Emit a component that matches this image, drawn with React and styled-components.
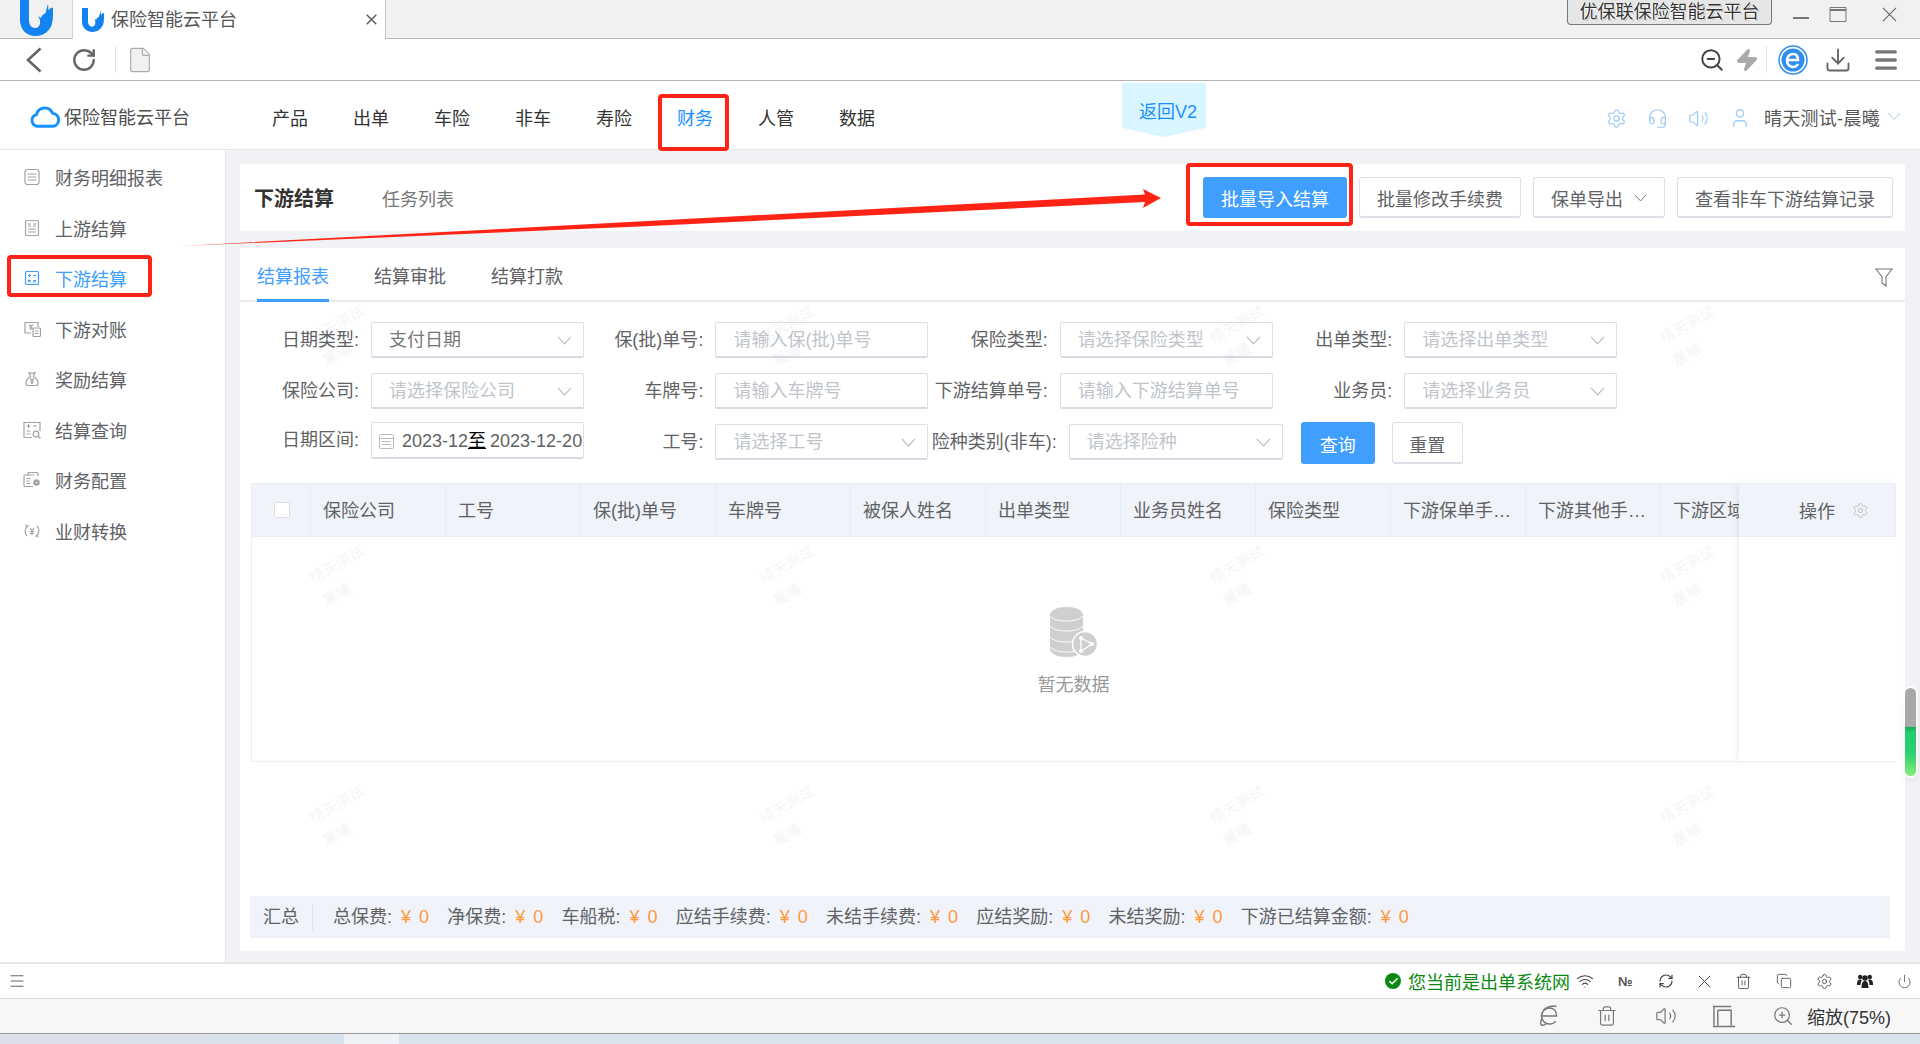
import React from 'react'
import styled, { createGlobalStyle } from 'styled-components'
import {
  Settings, Headset, Volume2, User, ZoomOut, ZoomIn, Zap, Download, Menu,
  RefreshCw, Trash2, Copy, Wifi, Power, Check, RotateCw, File,
} from 'lucide-react'

const Global = createGlobalStyle`
  html, body { margin: 0; padding: 0; background: #fff; }
  * { box-sizing: border-box; }
  body { font-family: "Liberation Sans", "Noto Sans CJK SC", sans-serif; font-size: 18px; color: #606266; }
`

const Page = styled.div`
  position: relative;
  width: 1920px;
  height: 1044px;
  overflow: hidden;
  display: flex;
  flex-direction: column;
`

/* browser chrome */
const TitleBar = styled.div`
  height: 39px;
  flex: none;
  display: flex;
  background: #f1f1f1;
  border-bottom: 1px solid #b4b4b4;
`
const BigLogo = styled.div`
  width: 72px;
  padding-left: 20px;
  display: flex;
`
const BrowserTab = styled.div`
  width: 314px;
  height: 39px;
  background: #fff;
  border-left: 1px solid #d4d4d4;
  border-right: 1px solid #c4c4c4;
  display: flex;
  align-items: center;
  padding: 0 8px 0 9px;
  color: #555;
  line-height: 38px;
  span { margin-left: 7px; flex: 1; }
`
const BrandBox = styled.div`
  margin-left: auto;
  width: 205px;
  height: 25px;
  border: 1px solid #777;
  border-top: none;
  border-radius: 0 0 4px 4px;
  background: #e6e6e6;
  text-align: center;
  line-height: 25px;
  color: #333;
  text-shadow: 1px 0 0 #fff, -1px 0 0 #fff, 0 1px 0 #fff, 1px 1px 0 #888;
`
const WinControls = styled.div`
  display: flex;
  width: 148px;
  padding: 7px 0 0 21px;
  color: #666;
`
const MinLine = styled.i`
  width: 16px;
  height: 2px;
  background: #777;
  margin: 10px 20px 0 0;
`
const MaxSvg = styled.svg`
  margin-right: 35px;
`
const Toolbar = styled.div`
  height: 42px;
  flex: none;
  display: flex;
  align-items: center;
  padding-left: 26px;
  border-bottom: 1px solid #b4b4b4;
  color: #666;
  background: #fff;
`
const ToolSlot = styled.div`
  display: flex;
  flex: none;
  margin-left: ${p => p.$ml || 0}px;
`
const ToolDivider = styled.i`
  width: 1px;
  height: 27px;
  flex: none;
  background: #e2e2e2;
  margin-left: ${p => p.$ml || 0}px;
`

/* app nav */
const AppNav = styled.div`
  height: 69px;
  flex: none;
  display: flex;
  align-items: center;
  border-bottom: 1px solid #e5e5e5;
  padding-left: 30px;
  background: #fff;
`
const AppLogo = styled.div`
  width: 242px;
  display: flex;
  align-items: center;
  gap: 4px;
  margin-top: 2px;
  color: #4d4d4d;
`
const NavList = styled.div`
  display: flex;
  gap: 45px;
  margin-top: 7px;
`
const NavItem = styled.div`
  position: relative;
  color: ${p => (p.$active ? '#1890ff' : '#333')};
  line-height: 26px;
`
const RedBox = styled.div`
  position: absolute;
  border: 4px solid #ff2416;
  border-radius: 4px;
  z-index: 5;
  pointer-events: none;
  top: ${p => p.$t}px;
  left: ${p => p.$l}px;
  right: ${p => p.$r}px;
  bottom: ${p => p.$b}px;
`
const BackBadge = styled.div`
  position: absolute;
  left: 1122px;
  top: 83px;
  width: 84px;
  height: 54px;
  padding: 15px 0 0 17px;
  background: #d9f5ff;
  color: #1890ff;
  line-height: 28px;
  clip-path: polygon(0 0, 100% 0, 100% 83%, 50% 100%, 0 83%);
`
const NavRight = styled.div`
  margin-left: auto;
  display: flex;
  align-items: center;
  padding: 3px 19px 0 0;
  color: #555;
  svg.tool { color: #9ccbf5; margin: 3px 20px 0 0; }
`
const UserName = styled.span`
  margin: 0 7px 0 -7px;
  letter-spacing: 0.3px;
`

/* body */
const Body = styled.div`
  flex: 1;
  min-height: 0;
  display: flex;
`
const Sidebar = styled.aside`
  width: 226px;
  flex: none;
  background: #fff;
  border-right: 1px solid #e6e6e6;
  padding-top: 2px;
`
const SideItem = styled.div`
  position: relative;
  height: 50.5px;
  display: flex;
  align-items: center;
  padding-left: 22px;
  color: ${p => (p.$active ? '#409eff' : '#606266')};
`
const SideIcon = styled.svg`
  width: 20px;
  height: 20px;
  margin-right: 13px;
  fill: none;
  stroke: ${p => (p.$active ? '#409eff' : '#a2a2a2')};
  stroke-width: 1.2;
`
const Main = styled.main`
  flex: 1;
  min-width: 0;
  background: #f0f2f5;
  padding: 14px 15px 11px 14px;
  display: flex;
  flex-direction: column;
  gap: 17px;
`
const HeaderCard = styled.div`
  height: 67px;
  flex: none;
  background: #fff;
  display: flex;
  align-items: center;
  padding: 0 12px 0 14px;
`
const PageTitle = styled.h2`
  margin: 0;
  font-size: 20px;
  font-weight: 700;
  color: #333;
`
const TaskLink = styled.span`
  margin-left: 48px;
  color: #777;
`
const Actions = styled.div`
  margin-left: auto;
  display: flex;
  gap: 12px;
`
const Button = styled.button`
  position: relative;
  font: inherit;
  height: ${p => p.$h || 41}px;
  width: ${p => (p.$w ? p.$w + 'px' : 'auto')};
  padding: 2px ${p => (p.$w ? 0 : 17)}px 0;
  border-radius: 3px;
  border: 1px solid ${p => (p.$primary ? '#409eff' : '#dcdfe6')};
  border-bottom-width: 2px;
  background: ${p => (p.$primary ? '#409eff' : '#fff')};
  color: ${p => (p.$primary ? '#fff' : '#606266')};
  display: flex;
  align-items: center;
  justify-content: center;
  gap: 11px;
  white-space: nowrap;
  svg { margin-left: 0; }
`
const TabCard = styled.section`
  flex: 1;
  min-height: 0;
  background: #fff;
  display: flex;
  flex-direction: column;
`
const TabRow = styled.div`
  height: 54px;
  flex: none;
  display: flex;
  gap: 45px;
  padding: 0 12px 0 17px;
  border-bottom: 2px solid #e8eaf0;
`
const Tab = styled.div`
  height: 54px;
  line-height: 58px;
  color: ${p => (p.$active ? '#409eff' : '#606266')};
  border-bottom: ${p => (p.$active ? '3px solid #409eff' : 'none')};
`
const FilterSlot = styled.div`
  margin-left: auto;
  padding-top: 20px;
  color: #777;
`
const Form = styled.div`
  padding: 20px 0 0 4px;
  flex: none;
`
const FormRow = styled.div`
  display: flex;
  height: ${p => p.$h}px;
  margin-bottom: ${p => p.$mb}px;
`
const Field = styled.label`
  display: flex;
  width: ${p => (p.$wide ? 349 : 344.4)}px;
  flex: none;
  margin-left: ${p => (p.$wide ? -2 : 0)}px;
  padding-top: ${p => p.$pt || 0}px;
`
const FieldLabel = styled.span`
  width: ${p => (p.$wide ? 126 : 115)}px;
  flex: none;
  height: 36px;
  line-height: 37px;
  margin-right: 12px;
  text-align: right;
  white-space: nowrap;
`
const Control = styled.div`
  width: ${p => (p.$wide ? 214 : 213)}px;
  flex: none;
  height: ${p => p.$h || 36}px;
  border: 1px solid #dcdfe6;
  border-bottom: 2px solid #d8dbe3;
  border-radius: 2px;
  display: flex;
  align-items: center;
  padding: 1px 11px 0 17px;
  overflow: hidden;
  white-space: nowrap;
  line-height: 32px;
  color: ${p => (p.$filled ? '#777' : '#c0c4cc')};
`
const DateControl = styled(Control)`
  padding: 1px 0 0 6px;
  color: #606266;
  svg { flex: none; margin-right: 7px; }
  b { font-weight: 400; color: #000; text-decoration: underline; margin: 0 4px 0 0; }
`
const ChevronSvg = styled.svg`
  margin-left: auto;
  flex: none;
  fill: none;
  stroke: ${p => p.$color || '#b4b8c0'};
  stroke-width: 1.1;
`
const FormButtons = styled.div`
  display: flex;
  gap: 17px;
  margin-left: 21px;
`
const TableWrap = styled.div`
  position: relative;
  margin: 19px 9px 0 11px;
  flex: none;
`
const THead = styled.div`
  height: 54px;
  display: flex;
  background: #f0f3f9;
  border: 1px solid #ebeef5;
  overflow: hidden;
`
const CheckCell = styled.div`
  width: 59px;
  flex: none;
  display: flex;
  align-items: center;
  padding-left: 22px;
  border-right: 1px solid #e8ebf2;
`
const Checkbox = styled.i`
  width: 16px;
  height: 16px;
  background: #fff;
  border: 1px solid #dcdfe6;
  border-radius: 2px;
`
const TH = styled.div`
  width: 135px;
  flex: none;
  padding: 0 12px;
  line-height: 54px;
  border-right: 1px solid #e8ebf2;
  white-space: nowrap;
  overflow: hidden;
  text-overflow: ellipsis;
`
const TBody = styled.div`
  height: 225px;
  border: 1px solid #ebeef5;
  border-top: none;
  display: flex;
  flex-direction: column;
  align-items: center;
  justify-content: center;
  padding-top: 5px;
  gap: 16px;
  color: #999;
  line-height: 24px;
`
const FixedCol = styled.div`
  position: absolute;
  top: 0;
  right: 0;
  bottom: 0;
  width: 157px;
  background: #fff;
  box-shadow: -3px 0 6px rgba(60, 70, 100, 0.07);
  border-bottom: 1px solid #ebeef5;
  z-index: 2;
`
const FixedHead = styled.div`
  height: 54px;
  background: #f0f3f9;
  border: 1px solid #ebeef5;
  border-left: none;
  display: flex;
  align-items: center;
  padding-left: 60px;
  gap: 17px;
  svg { color: #aaa; }
`
const Summary = styled.div`
  margin: auto 15px 13px 10px;
  height: 42px;
  flex: none;
  background: #f0f3f9;
  display: flex;
  align-items: center;
  padding-left: 13px;
`
const SumTitle = styled.span`
  padding-right: 13px;
  margin-right: 20px;
  line-height: 25px;
  border-right: 1px solid #dde0e8;
`
const SumItem = styled.span`
  margin-right: 16.7px;
  line-height: 25px;
  white-space: nowrap;
  em { font-style: normal; color: #ff9a3c; margin-left: 9px; letter-spacing: 1.5px; }
`

/* bottom bars */
const StatusBar = styled.div`
  height: 37px;
  flex: none;
  background: #fff;
  border-top: 2px solid #e6e6e6;
  border-bottom: 1px solid #d8d8d8;
  display: flex;
  align-items: center;
  padding: 0 8px;
  color: #555;
`
const NetText = styled.div`
  margin-left: auto;
  display: flex;
  align-items: center;
  color: #0a8a12;
  gap: 7px;
`
const NetDot = styled.i`
  width: 16px;
  height: 16px;
  border-radius: 50%;
  background: #0a8a12;
  display: flex;
  align-items: center;
  justify-content: center;
  color: #fff;
`
const StatusIcons = styled.div`
  display: flex;
  align-items: center;
  gap: 24px;
  margin-left: 6px;
  color: #444;
`
const NumSign = styled.span`
  width: 16px;
  font-size: 13px;
  font-weight: 700;
  white-space: nowrap;
  color: #555;
`
const FooterBar = styled.div`
  height: 35px;
  flex: none;
  background: #f7f7f7;
  border-bottom: 1px solid #999;
  display: flex;
  align-items: center;
  justify-content: flex-end;
  padding-right: 29px;
  color: #333;
`
const FooterIcons = styled.div`
  display: flex;
  align-items: center;
  gap: 36.6px;
  margin-right: 13px;
  color: #777;
  svg { flex: none; }
`
const DesktopStrip = styled.div`
  height: 10px;
  flex: none;
  background: linear-gradient(90deg, #dde0ea 0, #d8e3ed 400px, #d8e3ed 100%);
  padding-left: 344px;
  i { display: block; width: 55px; height: 10px; background: #eef1f6; }
`

/* overlays */
const Watermarks = styled.div`
  position: absolute;
  left: 112px;
  top: 220px;
  width: 1800px;
  display: flex;
  flex-wrap: wrap;
  pointer-events: none;
  z-index: 3;
`
const Watermark = styled.div`
  width: 450px;
  height: 240px;
  display: flex;
  flex-direction: column;
  align-items: center;
  justify-content: center;
  gap: 10px;
  font-size: 15px;
  font-weight: 700;
  line-height: 20px;
  color: rgba(0, 0, 0, 0.055);
  span { display: block; transform: rotate(-30deg); }
`
const ArrowSvg = styled.svg`
  position: absolute;
  left: 0;
  top: 0;
  z-index: 6;
  pointer-events: none;
`
const ScrollThumb = styled.div`
  position: absolute;
  left: 1905px;
  top: 688px;
  width: 11px;
  height: 88px;
  border-radius: 6px;
  background: linear-gradient(180deg, #a8a8a8 0, #a8a8a8 44%, #18a858 44%, #22cc6e 50%, #2fd070 75%, #85ee7a 100%);
  box-shadow: 0 0 0 2px rgba(255, 255, 255, 0.8), 0 4px 8px rgba(0, 0, 0, 0.08);
  z-index: 6;
`

const Chevron = ({ w = 15, color }) => (
  <ChevronSvg width={w} height={w * 0.6} viewBox="0 0 16 9.6" $color={color}>
    <path d="M1 1l7 7.5L15 1" />
  </ChevronSvg>
)

const Cross = ({ s, color = 'currentColor', sw = 1.2 }) => (
  <svg width={s} height={s} viewBox="0 0 16 16" fill="none" stroke={color} strokeWidth={sw} style={{ flex: 'none' }}>
    <path d="M1 1l14 14M15 1L1 15" />
  </svg>
)

const ULogo = ({ w, h }) => (
  <svg width={w} height={h} viewBox="0 0 33 36">
    <path
      fill="#1283f0"
      d="M0 0h8.500c.3 0 .5.2.5.5V20c0 5 2.500 8 6 8 3.500 0 5.500-3 5-7-.3-2-1-3.500-2-5l3 2 1.500-3 3-2 2.500-9 .5 6 3-2.500 2 .5c-.5 5-.5 9-1 13C31.500 30 24 36 15.500 36 6 36 0 29 0 20V0z"
    />
  </svg>
)

const Cloud = () => (
  <svg width="30" height="24" viewBox="0 0 30 24" fill="none" stroke="#1890ff" strokeWidth="3">
    <path d="M8 22.300a6 6 0 0 1-1.500-11.800A8.500 8.500 0 0 1 22.600 9.200 6.600 6.600 0 0 1 23 22.300z" />
  </svg>
)

const sideIcons = [
  <><rect x="3" y="2.500" width="14" height="15" rx="2.500" /><path d="M5.500 7h9M5.500 10h9M5.500 13h9" /></>,
  <><rect x="3.500" y="2.500" width="13" height="15" rx="1" /><path d="M6 6h3M6 8h3M11 6h3M11 8h3M6 11h8M6 14h8" /></>,
  <><rect x="3.500" y="3.500" width="13" height="13" rx="1" /><path d="M6 7.500h3M7.500 6v3M11 7.500h3M6 12l2.500 2M8.500 12L6 14M11 12.500h3M11 14h3" /></>,
  <><path d="M16 8V3.500H3V14h6" /><path d="M7 5.500l2 2 2-2M9 7.500V11M7 9h4" /><rect x="11" y="9" width="7.500" height="8.500" rx="1" /><path d="M13 12h3.500M13 14.500h3.500" /></>,
  <><path d="M7 3.500l3 1 3-1-1.500 4c3 1.500 4.500 4.500 4.500 7 0 1.500-1 2-2 2H6c-1 0-2-.5-2-2 0-2.500 1.500-5.500 4.500-7z" /><path d="M8 9.500l2 2 2-2M10 11.500V15M8 13h4" /></>,
  <><path d="M18 11V2.500H2v15h8" /><path d="M4.500 6h4M6.500 4v4M11 6h4M4.500 11h4M4.500 14h4" /><circle cx="14" cy="14" r="2.800" /><path d="M16 16l2.500 2.500" /></>,
  <><path d="M11 16.500H3a1 1 0 0 1-1-1V6a1 1 0 0 1 1-1h9" /><path d="M6 5V3.500a1 1 0 0 1 1-1h8a1 1 0 0 1 1 1V6M4.500 8.500h4M4.500 11h3M4.500 13.500h4" /><circle cx="14.500" cy="12.500" r="2" strokeWidth="2.500" /></>,
  <><path d="M5 5.500a7 7 0 0 0 0 9.500M15 14.500a7 7 0 0 0 0-9.500" /><path d="M3.500 3.500l1.500 2 2-1M16.500 16.500l-1.500-2-2 1" /><path d="M8 7l2 2.500L12 7M10 9.500V14M8 10.500h4M8 12.500h4" /></>,
]
const sideItems = ['财务明细报表', '上游结算', '下游结算', '下游对账', '奖励结算', '结算查询', '财务配置', '业财转换']
const navItems = ['产品', '出单', '车险', '非车', '寿险', '财务', '人管', '数据']
const columns = ['保险公司', '工号', '保(批)单号', '车牌号', '被保人姓名', '出单类型', '业务员姓名', '保险类型', '下游保单手续费', '下游其他手续费', '下游区域']
const summary = [
  ['总保费', 0], ['净保费', 0], ['车船税', 0], ['应结手续费', 0], ['未结手续费', 0],
  ['应结奖励', 0], ['未结奖励', 0], ['下游已结算金额', 0],
]

const Select = ({ label, text, filled, pt, wide }) => (
  <Field $pt={pt} $wide={wide}>
    <FieldLabel $wide={wide}>{label}:</FieldLabel>
    <Control $filled={filled} $wide={wide}>
      {text}
      <Chevron />
    </Control>
  </Field>
)
const Input = ({ label, text }) => (
  <Field>
    <FieldLabel>{label}:</FieldLabel>
    <Control>{text}</Control>
  </Field>
)

const DbIcon = () => (
  <svg width="48" height="50" viewBox="0 0 48 50">
    <path fill="#cfcfcf" d="M0 8c0-4.500 7-8 16.500-8S33 3.500 33 8v34c0 4.500-7 8-16.500 8S0 46.500 0 42z" />
    <path fill="none" stroke="#fff" strokeWidth="1" d="M0 9c3 3.500 9 5 16.500 5S30 12.500 33 9M0 19c3 3.500 9 5 16.500 5S30 22.500 33 19M0 30c3 3.500 9 5 16.500 5S30 33.500 33 30M0 40c3 3.500 9 5 16.500 5S30 43.500 33 40" />
    <circle cx="35" cy="37" r="12.500" fill="#cfcfcf" stroke="#fff" strokeWidth="1.500" />
    <path fill="none" stroke="#fff" strokeWidth="1.300" d="M31 31l11 6-11 7z" />
    <circle cx="31" cy="31" r="2" fill="#fff" /><circle cx="42" cy="37" r="2" fill="#fff" /><circle cx="31" cy="44" r="2" fill="#fff" />
  </svg>
)

const GroupIcon = () => (
  <svg width="16" height="16" viewBox="0 0 16 16" fill="#222" style={{ flex: 'none' }}>
    <circle cx="3.200" cy="4" r="2.200" /><circle cx="12.800" cy="4" r="2.200" /><circle cx="8" cy="5" r="2.800" />
    <path d="M0 11c0-3 1-4.500 3-4.500 1 0 1.500.3 2 .8-1 1-1.500 2.500-1.500 4.700H0zM16 11c0-3-1-4.500-3-4.500-1 0-1.500.3-2 .8 1 1 1.500 2.500 1.500 4.700H16zM4.500 15c0-4.500 1-7 3.500-7s3.500 2.500 3.500 7z" />
  </svg>
)

export default function App() {
  return (
    <Page>
      <Global />
      <TitleBar>
        <BigLogo><ULogo w={33} h={36} /></BigLogo>
        <BrowserTab>
          <ULogo w={22} h={24} />
          <span>保险智能云平台</span>
          <Cross s={11} color="#555" sw={2} />
        </BrowserTab>
        <BrandBox>优保联保险智能云平台</BrandBox>
        <WinControls>
          <MinLine />
          <MaxSvg width="18" height="15" viewBox="0 0 18 15" fill="none" stroke="#777">
            <path d="M1 .5h16v14H1z" /><path d="M1 3h16" strokeWidth="2" />
          </MaxSvg>
          <Cross s={15} color="#666" />
        </WinControls>
      </TitleBar>

      <Toolbar>
        <svg width="16" height="26" viewBox="0 0 16 26" fill="none" stroke="#666" strokeWidth="2.600">
          <path d="M14.500 1.500L2 13l12.500 11.500" />
        </svg>
        <ToolSlot $ml={29}><RotateCw size={26} strokeWidth={2.200} /></ToolSlot>
        <ToolDivider $ml={18} />
        <ToolSlot $ml={10}><File size={28} strokeWidth={1} fill="#f1f1f1" color="#aaa" /></ToolSlot>
        <ToolSlot $ml={1545}><ZoomOut size={26} strokeWidth={1.800} color="#444" /></ToolSlot>
        <ToolSlot $ml={10}><Zap size={24} fill="#aaa" color="#aaa" /></ToolSlot>
        <ToolDivider $ml={7} />
        <ToolSlot $ml={11}>
          <svg width="30" height="30" viewBox="0 0 30 30" fill="none">
            <circle cx="15" cy="15" r="14" stroke="#2f8ff0" strokeWidth="1.500" />
            <circle cx="15" cy="15" r="11.500" fill="#2f8ff0" />
            <path d="M8 15h12c0-4-2-6-5-6s-6 2.500-6 6.500 3 6.500 6 6.500c2 0 4-1 5-3" stroke="#fff" strokeWidth="2.500" />
          </svg>
        </ToolSlot>
        <ToolSlot $ml={16}><Download size={28} strokeWidth={1.600} /></ToolSlot>
        <ToolSlot $ml={20}><Menu size={28} strokeWidth={2.800} color="#777" /></ToolSlot>
      </Toolbar>

      <AppNav>
        <AppLogo><Cloud />保险智能云平台</AppLogo>
        <NavList>
          {navItems.map(n => (
            <NavItem key={n} $active={n === '财务'}>
              {n}
              {n === '财务' && <RedBox $t={-12} $b={-19} $l={-19} $r={-16} />}
            </NavItem>
          ))}
        </NavList>
        <BackBadge>返回V2</BackBadge>
        <NavRight>
          <Settings className="tool" size={21} strokeWidth={1.400} />
          <Headset className="tool" size={21} strokeWidth={1.400} />
          <Volume2 className="tool" size={21} strokeWidth={1.400} />
          <User className="tool" size={22} strokeWidth={1.400} />
          <UserName>晴天测试-晨曦</UserName>
          <Chevron w={14} color="#9ccbf5" />
        </NavRight>
      </AppNav>

      <Body>
        <Sidebar>
          {sideItems.map((s, i) => (
            <SideItem key={s} $active={i === 2}>
              <SideIcon viewBox="0 0 20 20" $active={i === 2}>{sideIcons[i]}</SideIcon>
              {s}
              {i === 2 && <RedBox $t={2} $b={7} $l={7} $r={73} />}
            </SideItem>
          ))}
        </Sidebar>
        <Main>
          <HeaderCard>
            <PageTitle>下游结算</PageTitle>
            <TaskLink>任务列表</TaskLink>
            <Actions>
              <Button $primary>
                批量导入结算
                <RedBox $t={-15} $b={-10} $l={-18} $r={-7} />
              </Button>
              <Button>批量修改手续费</Button>
              <Button $w={132}>保单导出<Chevron w={13} color="#666" /></Button>
              <Button>查看非车下游结算记录</Button>
            </Actions>
          </HeaderCard>

          <TabCard>
            <TabRow>
              <Tab $active>结算报表</Tab>
              <Tab>结算审批</Tab>
              <Tab>结算打款</Tab>
              <FilterSlot>
                <svg width="18" height="19" viewBox="0 0 18 19" fill="none" stroke="#777" strokeWidth="1.100">
                  <path d="M1 1h16l-6 8v9l-4-3V9z" />
                </svg>
              </FilterSlot>
            </TabRow>

            <Form>
              <FormRow $h={36} $mb={15}>
                <Select label="日期类型" text="支付日期" filled />
                <Input label="保(批)单号" text="请输入保(批)单号" />
                <Select label="保险类型" text="请选择保险类型" />
                <Select label="出单类型" text="请选择出单类型" />
              </FormRow>
              <FormRow $h={36} $mb={13}>
                <Select label="保险公司" text="请选择保险公司" />
                <Input label="车牌号" text="请输入车牌号" />
                <Input label="下游结算单号" text="请输入下游结算单号" />
                <Select label="业务员" text="请选择业务员" />
              </FormRow>
              <FormRow $h={42} $mb={0}>
                <Field>
                  <FieldLabel>日期区间:</FieldLabel>
                  <DateControl $h={37}>
                    <svg width="17" height="18" viewBox="0 0 17 18" fill="none" stroke="#bbb">
                      <rect x="1.500" y="2.500" width="14" height="14" rx="1" />
                      <path d="M1.500 6.500h14M4 9.500h9M4 12.500h9" />
                    </svg>
                    2023-12<b>至</b>2023-12-20
                  </DateControl>
                </Field>
                <Select label="工号" text="请选择工号" pt={2} />
                <Select label="险种类别(非车)" text="请选择险种" pt={2} wide />
                <FormButtons>
                  <Button $primary $w={74} $h={42}>查询</Button>
                  <Button $w={71} $h={42}>重置</Button>
                </FormButtons>
              </FormRow>
            </Form>

            <TableWrap>
              <THead>
                <CheckCell><Checkbox /></CheckCell>
                {columns.map(c => <TH key={c}>{c}</TH>)}
              </THead>
              <TBody>
                <DbIcon />
                <span>暂无数据</span>
              </TBody>
              <FixedCol>
                <FixedHead>操作<Settings size={17} strokeWidth={1} /></FixedHead>
              </FixedCol>
            </TableWrap>

            <Summary>
              <SumTitle>汇总</SumTitle>
              {summary.map(([k, v]) => (
                <SumItem key={k}>{k}:<em>¥ {v}</em></SumItem>
              ))}
            </Summary>
          </TabCard>
        </Main>
      </Body>

      <StatusBar>
        <Menu size={18} strokeWidth={1.600} color="#666" />
        <NetText>
          <NetDot><Check size={11} strokeWidth={3.500} /></NetDot>
          您当前是出单系统网
        </NetText>
        <StatusIcons>
          <Wifi size={18} strokeWidth={1.500} />
          <NumSign>№</NumSign>
          <RefreshCw size={16} strokeWidth={1.800} />
          <Cross s={13} />
          <Trash2 size={17} strokeWidth={1.200} />
          <Copy size={16} strokeWidth={1.200} />
          <Settings size={17} strokeWidth={1.200} />
          <GroupIcon />
          <Power size={15} strokeWidth={1.200} />
        </StatusIcons>
      </StatusBar>

      <FooterBar>
        <FooterIcons>
          <svg width="22" height="22" viewBox="0 0 21 22" fill="none" stroke="#777" strokeWidth="1.500">
            <path d="M3 11h15c0-5-3-8-7-8s-8 3.500-8 8 3.500 8 8 8c3 0 5-1 6-3" />
            <path d="M5 5C8 2 15 0 18 1.500M3 14c-1 3-1 5.500 0 6 1 .5 3 0 5-1.500" />
          </svg>
          <Trash2 size={22} strokeWidth={1.300} />
          <Volume2 size={22} strokeWidth={1.300} />
          <svg width="22" height="23" viewBox="0 0 23 23" fill="none" stroke="#777" strokeWidth="1.500">
            <path d="M0 1h19M5 5h14v16M5 5v16M0 22h23M1 1v20" />
          </svg>
          <ZoomIn size={22} strokeWidth={1.300} />
        </FooterIcons>
        缩放(75%)
      </FooterBar>
      <DesktopStrip><i /></DesktopStrip>

      <Watermarks>
        {Array.from({ length: 12 }).map((_, i) => (
          <Watermark key={i}><span>晴天测试</span><span>晨曦</span></Watermark>
        ))}
      </Watermarks>
      <ArrowSvg width="1920" height="300">
        <path
          fill="#ff2416"
          d="M181 246L1145 194.500 1143 189 1161 198 1143 208 1145 202 640 226.500z"
        />
      </ArrowSvg>
      <ScrollThumb />
    </Page>
  )
}
